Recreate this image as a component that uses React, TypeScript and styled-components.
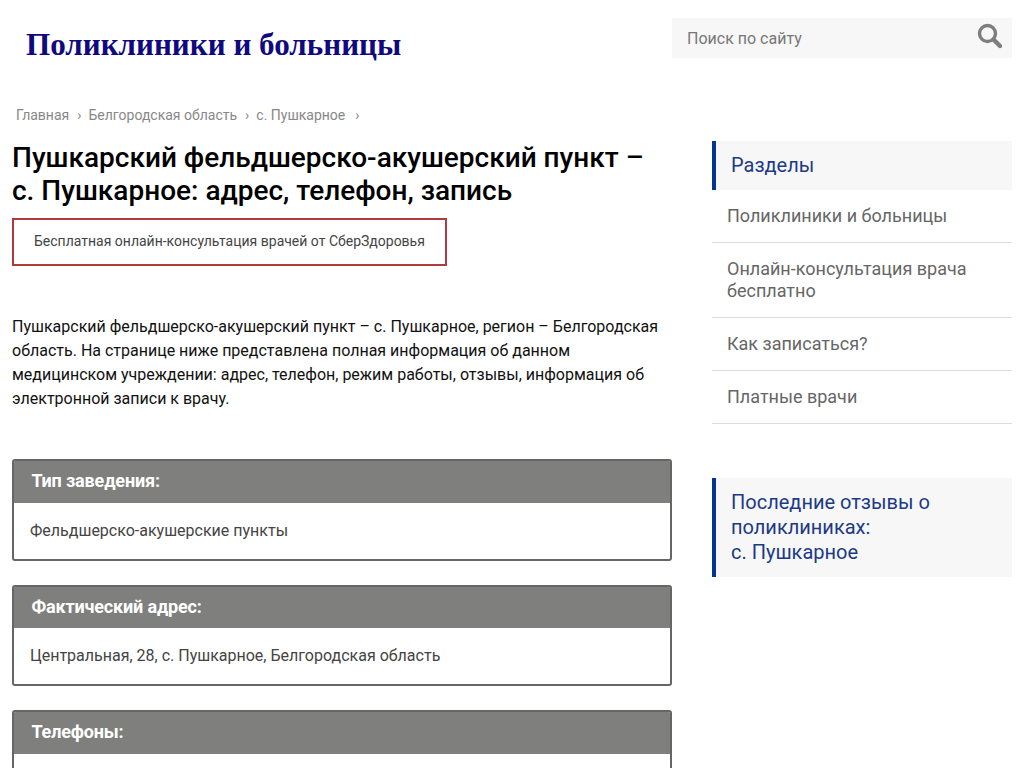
import React from "react";
import styled, { createGlobalStyle } from "styled-components";

const GlobalStyle = createGlobalStyle`
  html, body {
    margin: 0;
    padding: 0;
    height: 768px;
    overflow: hidden;
    background: #fff;
    font-family: Roboto, "Liberation Sans", sans-serif;
  }
`;

const Page = styled.div`
  width: 1024px;
  box-sizing: border-box;
  padding: 0 12px;
`;

const Header = styled.header`
  display: flex;
  justify-content: space-between;
  align-items: flex-start;
  height: 104px;
  padding-top: 18px;
  box-sizing: border-box;
`;

const Logo = styled.a`
  margin: 9px 0 0 14px;
  font-family: "Liberation Serif", "DejaVu Serif", serif;
  font-weight: bold;
  font-size: 31.1px;
  line-height: 36px;
  color: #10087f;
`;

const Search = styled.div`
  display: flex;
  align-items: center;
  justify-content: space-between;
  width: 340px;
  height: 40px;
  box-sizing: border-box;
  padding: 0 10px 0 15px;
  background: #f7f7f7;
  font-size: 16px;
  color: #777;
`;

const SearchIcon = styled.svg`
  width: 26px;
  height: 26px;
  display: block;
  margin-top: -4px;
`;

const Breadcrumbs = styled.nav`
  display: flex;
  padding-left: 4px;
  font-size: 14px;
  line-height: 22px;
  color: #888;
`;

const Crumb = styled.span`
  &::after {
    content: "›";
    margin: 0 7px 0 8px;
  }
  &:last-child::after {
    margin-left: 10px;
  }
`;

const Columns = styled.div`
  display: flex;
  justify-content: space-between;
  align-items: flex-start;
`;

const Main = styled.main`
  width: 660px;
`;

const Title = styled.h1`
  margin: 15px 0 11px;
  font-size: 28px;
  font-weight: 500;
  line-height: 33px;
  color: #000;
`;

const Notice = styled.a`
  display: block;
  width: 435px;
  height: 48px;
  box-sizing: border-box;
  border: 2px solid #b23a3a;
  padding-left: 20px;
  font-size: 14px;
  line-height: 43px;
  color: #444;
`;

const Intro = styled.p`
  margin: 49px 0 48px;
  font-size: 16px;
  line-height: 24px;
  color: #111;
`;

const Card = styled.section`
  box-sizing: border-box;
  margin-bottom: 24px;
  border: 2px solid #666;
  border-radius: 3px;
  overflow: hidden;
`;

const CardHead = styled.h3`
  margin: 0;
  height: 41.6px;
  box-sizing: border-box;
  padding-left: 17.4px;
  background: #7f807e;
  font-size: 18px;
  font-weight: 700;
  letter-spacing: -0.15px;
  line-height: 40.8px;
  color: #fff;
`;

const CardBody = styled.div`
  height: 56px;
  padding-left: 16px;
  font-size: 16px;
  line-height: 55px;
  color: #444;
`;

const Sidebar = styled.aside`
  width: 300px;
  margin-top: 15px;
`;

const SideHead = styled.div<{ $spaced?: boolean }>`
  box-sizing: border-box;
  margin-top: ${(props) => (props.$spaced ? "54px" : "0")};
  padding: 12px 15px;
  border-left: 4px solid #003594;
  background: #f7f7f7;
  font-size: 20px;
  line-height: 25px;
  color: #1c3a86;
`;

const SideList = styled.ul`
  list-style: none;
  margin: 0;
  padding: 0;
`;

const SideItem = styled.li`
  padding: 15px 15px;
  border-bottom: 1px solid #ddd;
  font-size: 18px;
  line-height: 22px;
  color: #666;
`;

const cards = [
  { head: "Тип заведения:", body: "Фельдшерско-акушерские пункты" },
  { head: "Фактический адрес:", body: "Центральная, 28, с. Пушкарное, Белгородская область" },
  { head: "Телефоны:", body: "" },
];

const menu = [
  "Поликлиники и больницы",
  "Онлайн-консультация врача бесплатно",
  "Как записаться?",
  "Платные врачи",
];

const App = () => {
  return (
    <>
      <GlobalStyle />
      <Page>
        <Header>
          <Logo>Поликлиники и больницы</Logo>
          <Search>
            Поиск по сайту
            <SearchIcon viewBox="0 0 26 26" fill="none" stroke="#7d7d7d">
              <circle cx="11.5" cy="10.5" r="8" strokeWidth="3.4" />
              <path d="M17.5 16.5 L24 23" strokeWidth="4.4" strokeLinecap="round" />
            </SearchIcon>
          </Search>
        </Header>
        <Breadcrumbs>
          <Crumb>Главная</Crumb>
          <Crumb>Белгородская область</Crumb>
          <Crumb>с. Пушкарное</Crumb>
        </Breadcrumbs>
        <Columns>
          <Main>
            <Title>
              Пушкарский фельдшерско-акушерский пункт –
              <br />
              с. Пушкарное: адрес, телефон, запись
            </Title>
            <Notice>Бесплатная онлайн-консультация врачей от СберЗдоровья</Notice>
            <Intro>
              Пушкарский фельдшерско-акушерский пункт – с. Пушкарное, регион – Белгородская
              область. На странице ниже представлена полная информация об данном
              медицинском учреждении: адрес, телефон, режим работы, отзывы, информация об
              электронной записи к врачу.
            </Intro>
            {cards.map((card) => (
              <Card key={card.head}>
                <CardHead>{card.head}</CardHead>
                <CardBody>{card.body}</CardBody>
              </Card>
            ))}
          </Main>
          <Sidebar>
            <SideHead>Разделы</SideHead>
            <SideList>
              {menu.map((item) => (
                <SideItem key={item}>{item}</SideItem>
              ))}
            </SideList>
            <SideHead $spaced>
              Последние отзывы о поликлиниках:
              <br />
              с. Пушкарное
            </SideHead>
          </Sidebar>
        </Columns>
      </Page>
    </>
  );
};

export default App;
